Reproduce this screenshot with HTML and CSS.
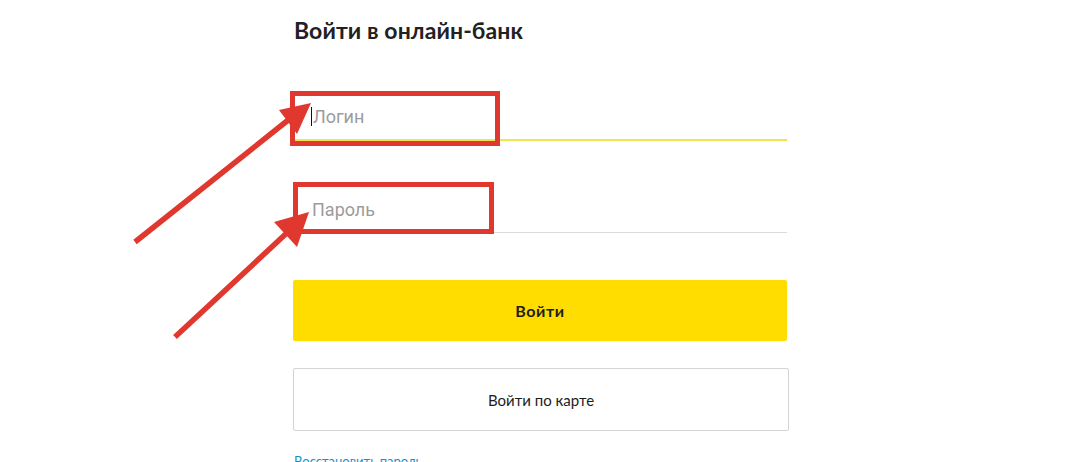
FILE: index.html
```html
<!DOCTYPE html>
<html lang="ru">
<head>
<meta charset="utf-8">
<title>Войти в онлайн-банк</title>
<link rel="stylesheet" href="styles.css">
</head>
<body>
<main class="page">
  <h1 class="title">Войти в онлайн-банк</h1>
  <div class="field field--active">
    <span class="cursor"></span><span class="placeholder">Логин</span>
  </div>
  <div class="field field--password">
    <span class="placeholder">Пароль</span>
  </div>
  <button class="btn btn--primary" type="button">Войти</button>
  <button class="btn btn--outline" type="button">Войти по карте</button>
  <a class="restore" href="#">Восстановить пароль</a>
</main>
<svg class="annotations" width="1080" height="462" viewBox="0 0 1080 462" aria-hidden="true">
  <g fill="none" stroke="#e0372f" stroke-width="5">
    <rect x="292.5" y="93.5" width="205" height="50"/>
    <rect x="295.5" y="184.5" width="196" height="47"/>
  </g>
  <g stroke="#e0372f" stroke-width="5.5" stroke-linecap="butt">
    <line x1="135" y1="242" x2="292" y2="117"/>
    <line x1="175" y1="337" x2="290" y2="230"/>
  </g>
  <g fill="#e0372f">
    <polygon points="311,103 279,110 297,134"/>
    <polygon points="309,212 274,222 297,247"/>
  </g>
</svg>
</body>
</html>
```
FILE: styles.css
```css
html, body {
  margin: 0;
  padding: 0;
  background: #ffffff;
}

body {
  width: 1080px;
  height: 462px;
  overflow: hidden;
  position: relative;
  font-family: "Lato", "DejaVu Sans", sans-serif;
}

.page {
  display: flex;
  flex-direction: column;
  width: 494px;
  margin-left: 293px;
}

.title {
  margin: 15px 0 0 1px;
  font-family: "Lato", sans-serif;
  font-weight: 700;
  font-size: 23px;
  line-height: 30px;
  color: #1f2123;
  letter-spacing: 0.1px;
}

.field {
  display: flex;
  align-items: center;
  height: 46px;
  padding-left: 18px;
  font-family: "Roboto", sans-serif;
  font-size: 18px;
}

.field--active {
  margin-top: 48px;
  border-bottom: 2px solid #f3e44e;
}

.field--password {
  margin-top: 45px;
  border-bottom: 1px solid #dcdcdc;
  margin-left: 2px;
  padding-left: 17px;
}

.placeholder {
  color: #9c9c9c;
}

.cursor {
  display: block;
  width: 1px;
  height: 19px;
  background: #111;
  margin-right: 1px;
}

.btn {
  display: flex;
  align-items: center;
  justify-content: center;
  width: 100%;
  font-family: "Lato", sans-serif;
  font-size: 16px;
  color: #1d1d1d;
  cursor: pointer;
}

.btn--primary {
  margin-top: 47px;
  height: 61px;
  border: none;
  border-radius: 2px;
  background: #ffdd00;
  font-weight: 700;
  letter-spacing: 0.6px;
}

.btn--outline {
  margin-top: 27px;
  height: 63px;
  width: 496px;
  border: 1px solid #d4d4d4;
  border-radius: 2px;
  background: #ffffff;
  font-weight: 400;
  font-size: 15px;
}

.restore {
  margin-top: 22px;
  margin-left: 1px;
  font-family: "Lato", sans-serif;
  font-size: 13px;
  color: #1c8fc8;
  text-decoration: none;
}

.annotations {
  position: absolute;
  top: 0;
  left: 0;
  pointer-events: none;
}
```
